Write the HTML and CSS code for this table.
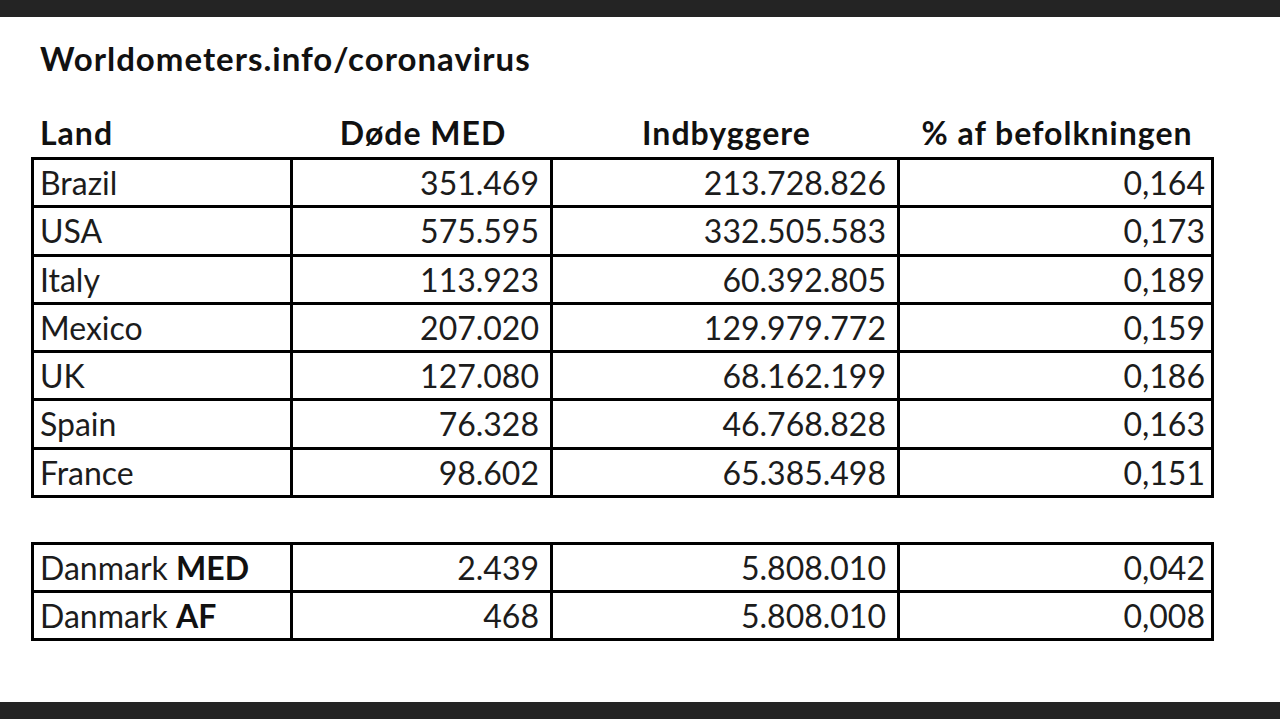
FILE: index.html
```html
<!DOCTYPE html>
<html lang="da">
<head>
<meta charset="utf-8">
<title>Worldometers.info/coronavirus</title>
<link rel="stylesheet" href="styles.css">
</head>
<body>
<div class="page">
  <div class="bar"></div>
  <main class="sheet">
    <h1 class="title">Worldometers.info/coronavirus</h1>
    <table class="grid main-grid">
      <colgroup>
        <col class="w1"><col class="w2"><col class="w3"><col class="w4">
      </colgroup>
      <thead>
        <tr>
          <th class="left">Land</th>
          <th>Døde MED</th>
          <th>Indbyggere</th>
          <th>% af befolkningen</th>
        </tr>
      </thead>
      <tbody>
        <tr><td class="c1">Brazil</td><td class="num">351.469</td><td class="num">213.728.826</td><td class="num c4">0,164</td></tr>
        <tr><td class="c1">USA</td><td class="num">575.595</td><td class="num">332.505.583</td><td class="num c4">0,173</td></tr>
        <tr><td class="c1">Italy</td><td class="num">113.923</td><td class="num">60.392.805</td><td class="num c4">0,189</td></tr>
        <tr><td class="c1">Mexico</td><td class="num">207.020</td><td class="num">129.979.772</td><td class="num c4">0,159</td></tr>
        <tr><td class="c1">UK</td><td class="num">127.080</td><td class="num">68.162.199</td><td class="num c4">0,186</td></tr>
        <tr><td class="c1">Spain</td><td class="num">76.328</td><td class="num">46.768.828</td><td class="num c4">0,163</td></tr>
        <tr><td class="c1">France</td><td class="num">98.602</td><td class="num">65.385.498</td><td class="num c4">0,151</td></tr>
      </tbody>
    </table>
    <table class="grid dk-grid">
      <colgroup>
        <col class="w1"><col class="w2"><col class="w3"><col class="w4">
      </colgroup>
      <tbody>
        <tr><td class="c1">Danmark <b>MED</b></td><td class="num">2.439</td><td class="num">5.808.010</td><td class="num c4">0,042</td></tr>
        <tr><td class="c1">Danmark <b>AF</b></td><td class="num">468</td><td class="num">5.808.010</td><td class="num c4">0,008</td></tr>
      </tbody>
    </table>
  </main>
  <div class="bar"></div>
</div>
</body>
</html>
```

FILE: styles.css
```css
html, body {
  margin: 0;
  padding: 0;
  background: #ffffff;
}

.page {
  width: 1280px;
  height: 719px;
  display: flex;
  flex-direction: column;
  font-family: Lato, "Open Sans", "Liberation Sans", sans-serif;
  color: #1c1c1c;
}

.bar {
  height: 17px;
  flex: 0 0 17px;
  background: #242424;
}

.sheet {
  flex: 1;
  background: #ffffff;
  overflow: hidden;
}

.title {
  margin: 0;
  padding: 21px 0 0 40px;
  font-size: 33px;
  line-height: 40px;
  letter-spacing: 1px;
  font-weight: 700;
  color: #111111;
}

.grid {
  border-collapse: separate;
  border-spacing: 0;
  margin-left: 31px;
  table-layout: fixed;
  width: 1183px;
}

.w1 { width: 262px; }
.w2 { width: 260px; }
.w3 { width: 347px; }
.w4 { width: 314px; }

.main-grid {
  margin-top: 37px;
}

.dk-grid {
  margin-top: 44px;
}

.grid th {
  font-size: 32px;
  line-height: 36px;
  letter-spacing: 1px;
  font-weight: 700;
  color: #111111;
  padding: 0 0 6px 0;
  text-align: center;
  vertical-align: bottom;
  white-space: nowrap;
}

.grid th.left {
  text-align: left;
  padding-left: 9px;
}

.grid td {
  box-sizing: border-box;
  font-size: 32px;
  line-height: 45.3px;
  height: 48.3px;
  padding: 0 11px 0 6px;
  border-right: 3px solid #000;
  border-bottom: 3px solid #000;
  white-space: nowrap;
  vertical-align: middle;
}

.grid td b {
  font-weight: 700;
  color: #111111;
}

.grid td.c1 {
  border-left: 3px solid #000;
}

.grid tbody tr:first-child td {
  border-top: 3px solid #000;
  height: 51.3px;
}

.dk-grid td {
  line-height: 45px;
  height: 48px;
}

.dk-grid tbody tr:first-child td {
  height: 51px;
}

.grid td.num {
  text-align: right;
}

.grid td.c4 {
  padding-right: 6px;
}
```
